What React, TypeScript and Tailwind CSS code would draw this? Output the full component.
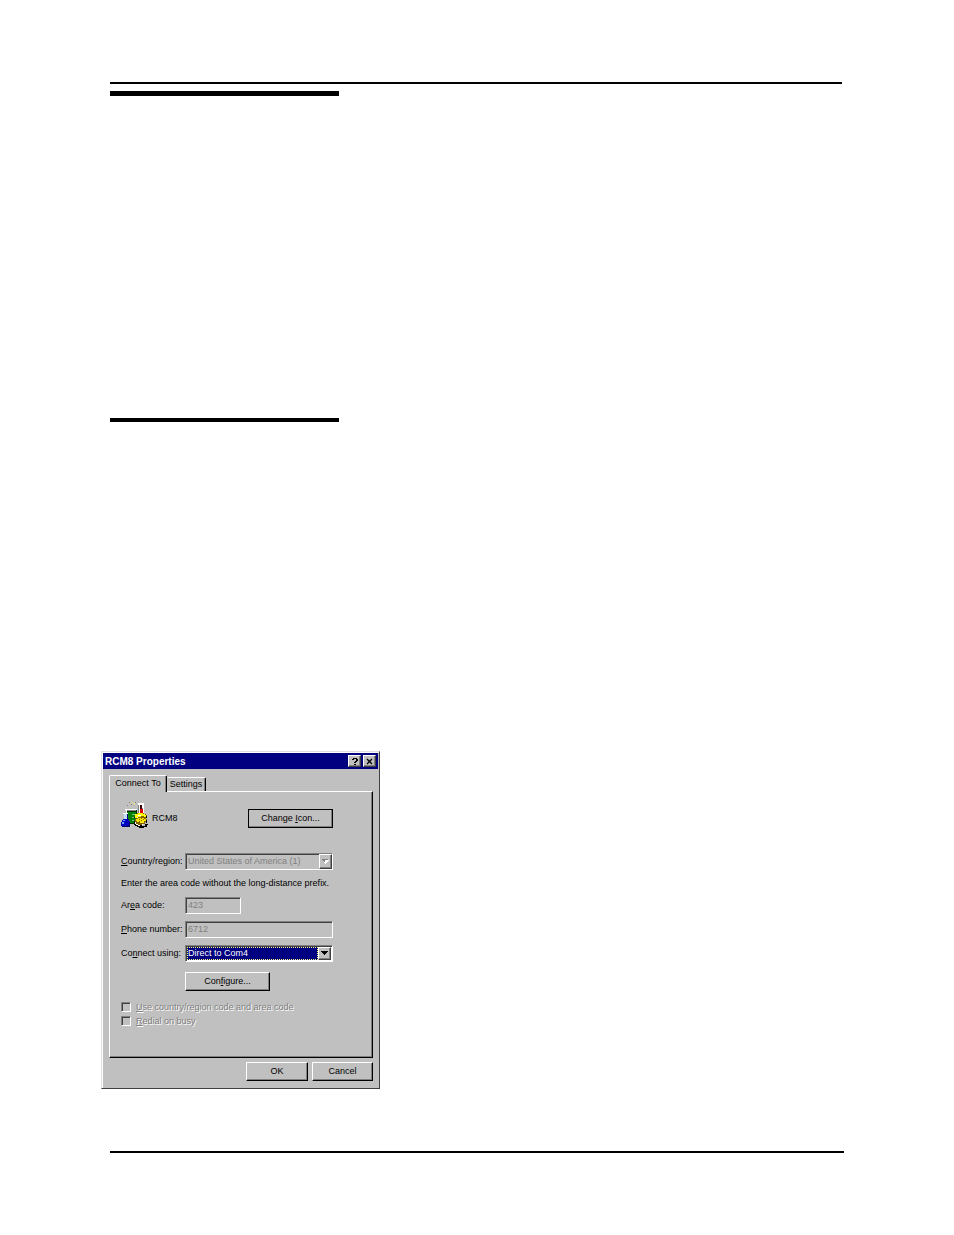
import type { ReactNode } from "react";

const raised =
  "border border-t-white border-l-white border-r-black border-b-black shadow-[inset_-1px_-1px_0_#808080]";
const raisedSoft =
  "border border-t-white border-l-white border-r-[#404040] border-b-[#404040] shadow-[inset_-1px_-1px_0_#808080]";
const sunken =
  "border border-t-[#808080] border-l-[#808080] border-r-white border-b-white shadow-[inset_1px_1px_0_#404040]";

function PushButton({ children, className = "" }: { children: ReactNode; className?: string }) {
  return (
    <button
      type="button"
      className={`flex h-[19px] items-center justify-center bg-[#c0c0c0] pb-px ${raised} ${className}`}
    >
      <span>{children}</span>
    </button>
  );
}

function Arrow({ disabled = false }: { disabled?: boolean }) {
  return (
    <span
      className={`pointer-events-none absolute top-px right-px bottom-px flex w-[13px] items-center justify-center bg-[#c0c0c0] ${raisedSoft}`}
    >
      <svg width="7" height="5" viewBox="0 0 7 5" shapeRendering="crispEdges">
        {disabled && <path d="M2 1h5v1h-1v1h-1v1h-1v1h-1v-1h-1z" fill="#fff" />}
        <path
          d={disabled ? "M0 0h6v1h-6zM1 1h2v1h-2zM2 2h1v1h-1z" : "M0 0h7v1h-7zM1 1h5v1h-5zM2 2h3v1h-3zM3 3h1v1h-1z"}
          fill={disabled ? "#808080" : "#000"}
        />
      </svg>
    </span>
  );
}

function HyperTerminalIcon() {
  return (
    <svg width="27" height="27" viewBox="0 0 27 27" shapeRendering="crispEdges" aria-hidden="true">
      {/* sparks */}
      <path d="M8 0h1v1h-1zM10 2h1v1h-1zM6 3h1v1h-1zM14 0h1v1h-1z" fill="#808080" />
      <path d="M11 0h1v1h-1zM12 1h2v1h-2zM13 2h1v1h-1zM9 1h1v1h-1z" fill="#e0e080" />
      {/* test tube */}
      <path d="M17 2h6v11h-6z" fill="#808080" />
      <path d="M17 1h6v2h-6zM18 3h1v9h-1z" fill="#fff" />
      <path d="M19 3h2v4h-2z" fill="#400000" />
      <path d="M19 7h3v6h-3z" fill="#e00000" />
      <path d="M21 3h2v3h-2zM22 6h1v6h-1z" fill="#fff" />
      {/* beaker */}
      <path d="M4 7h12v1h-12zM5 8h1v6h-1z" fill="#fff" />
      <path d="M6 8h9v1h-9z" fill="#808080" />
      <path d="M6 9h9v13h-9z" fill="#008000" />
      <path d="M6 9h9v1h-9zM15 8h1v6h-1zM7 21h9v1h-9z" fill="#003000" />
      <path d="M11 12h3v1h-3zM11 15h3v1h-3zM11 18h2v1h-2z" fill="#80c080" />
      {/* flask */}
      <path d="M3 12h3v5h-3z" fill="#c0e0ff" />
      <path d="M2 11h5v1h-5z" fill="#fff" />
      <path d="M6 12h1v5h-1zM7 17h1v1h-1z" fill="#000080" />
      <path d="M2 17h5v1h1v1h1v5h-1v1h-7v-1h-1v-4h1v-2h1z" fill="#0000c0" />
      <path d="M2 18h2v1h-2zM1 20h2v2h-2z" fill="#60a0ff" />
      <path d="M1 24h8v1h-8zM8 20h1v4h-1z" fill="#000060" />
      {/* telephone */}
      <path d="M14 21h2v1h2v1h3v1h3v-2h3v1h-1v2h-3v1h-5v-1h-2v-1h-2v-1h-2z" fill="#000" />
      <path d="M14 19h2v2h3v1h3v1h-3v1h-2v-1h-2v-1h-1z" fill="#fff" />
      <path d="M16 11h7v1h2v1h1v3h-1v1h1v3h-2v2h-3v1h-4v-1h-2v-2h-1v-3h1v-2h-1v-2h2z" fill="#806000" />
      <path d="M14 12h3v-1h5v1h2v1h1v2h-2v-1h-3v1h-3v1h-3z" fill="#ffff00" />
      <path d="M15 17h2v-1h6v1h2v2h-2v2h-4v-1h-3v-1h-1z" fill="#ffe800" />
      <path d="M17 13h3v1h-3zM16 15h1v1h-1z" fill="#fff" />
      <path d="M18 17h1v1h-1zM20 16h1v1h-1zM20 18h1v1h-1zM22 17h1v1h-1zM18 19h1v1h-1z" fill="#806000" />
      <path d="M25 14h1v2h-1zM25 18h1v3h-1zM13 15h1v1h-1zM13 19h1v2h-1z" fill="#000" />
    </svg>
  );
}

function CheckRow({ id, children }: { id: string; children: ReactNode }) {
  return (
    <div className="flex h-[14px] items-center gap-[5px]">
      <input id={id} type="checkbox" disabled className={`size-[10px] appearance-none bg-[#c0c0c0] ${sunken}`} />
      <label htmlFor={id} className="text-[#808080] [text-shadow:1px_1px_0_#fff]">
        {children}
      </label>
    </div>
  );
}

function PropertiesDialog() {
  return (
    <section
      aria-label="RCM8 Properties"
      className="w-[279px] border border-t-[#dfdfdf] border-l-[#dfdfdf] border-r-[#404040] border-b-[#404040] bg-[#c0c0c0] p-px pb-[7px] font-['Liberation_Sans',Arial,sans-serif] text-[9px] leading-[11px] text-black shadow-[inset_1px_1px_0_#fff]"
    >
      <header className="flex h-[16px] items-center gap-[2px] bg-[#000080] pr-[2px] pl-[2px]">
        <h1 className="flex-1 text-[10px] font-bold text-white">RCM8 Properties</h1>
        <button
          type="button"
          aria-label="Help"
          className={`flex h-[12px] w-[13px] items-center justify-center bg-[#c0c0c0] ${raisedSoft}`}
        >
          <svg width="6" height="7" viewBox="0 0 6 7" shapeRendering="crispEdges">
            <path d="M1 0h4v1h-4zM0 1h2v1h-2zM4 1h2v2h-2zM3 3h2v1h-2zM2 4h2v1h-2zM2 6h2v1h-2z" />
          </svg>
        </button>
        <button
          type="button"
          aria-label="Close"
          className={`flex h-[12px] w-[13px] items-center justify-center bg-[#c0c0c0] ${raisedSoft}`}
        >
          <svg width="7" height="7" viewBox="0 0 7 7">
            <path d="M1 1l5 5M6 1l-5 5" stroke="#000" strokeWidth="1.3" />
          </svg>
        </button>
      </header>

      <div className="pt-[6px] pr-[5px] pl-[6px]">
        <div role="tablist" className="flex items-end">
          <button
            type="button"
            role="tab"
            aria-selected="true"
            className="relative z-10 -mb-px h-[17px] w-[58px] rounded-t-[2px] border border-b-0 border-t-white border-l-white border-r-black bg-[#c0c0c0] pb-[2px] shadow-[inset_-1px_0_0_#808080]"
          >
            Connect To
          </button>
          <button
            type="button"
            role="tab"
            aria-selected="false"
            className="h-[14px] w-[39px] rounded-t-[2px] border border-b-0 border-l-0 border-t-white border-r-black bg-[#c0c0c0] shadow-[inset_-1px_0_0_#808080]"
          >
            Settings
          </button>
        </div>

        <form className="border border-t-white border-l-white border-r-black border-b-black px-[11px] pt-[10px] pb-[29px] shadow-[inset_-1px_-1px_0_#808080]">
          <div className="flex items-start">
            <HyperTerminalIcon />
            <span className="mt-[11px] ml-[4px] flex-1">RCM8</span>
            <PushButton className="mt-[7px] mr-[28px] w-[85px] outline outline-1 -outline-offset-1 outline-black">
              Change <u>I</u>con...
            </PushButton>
          </div>

          <div className="mt-[24px] mr-[28px] grid grid-cols-[64px_1fr] items-center">
            <label htmlFor="country" className="whitespace-nowrap">
              <u>C</u>ountry/region:
            </label>
            <div className="relative">
              <select
                id="country"
                disabled
                className={`block h-[17px] w-full appearance-none bg-[#c0c0c0] pl-[2px] text-[#808080] opacity-100 ${sunken}`}
              >
                <option>United States of America (1)</option>
              </select>
              <Arrow disabled />
            </div>

            <p className="col-span-2 my-[8px] whitespace-nowrap">
              Enter the area code without the long-distance prefix.
            </p>

            <label htmlFor="area">
              Ar<u>e</u>a code:
            </label>
            <input
              id="area"
              disabled
              defaultValue="423"
              className={`h-[17px] w-[56px] bg-[#c0c0c0] pb-px pl-[2px] text-[#808080] ${sunken}`}
            />

            <label htmlFor="phone" className="mt-[7px] whitespace-nowrap">
              <u>P</u>hone number:
            </label>
            <input
              id="phone"
              disabled
              defaultValue="6712"
              className={`mt-[7px] h-[17px] w-full bg-[#c0c0c0] pb-px pl-[2px] text-[#808080] ${sunken}`}
            />

            <label htmlFor="device" className="mt-[7px] whitespace-nowrap">
              Co<u>n</u>nect using:
            </label>
            <div className={`relative mt-[7px] bg-white p-px pr-[14px] ${sunken}`}>
              <select
                id="device"
                className="block h-[13px] w-full appearance-none border border-dotted border-[#ffff7f] bg-[#000080] leading-[11px] text-white outline-none"
              >
                <option>Direct to Com4</option>
              </select>
              <Arrow />
            </div>

            <PushButton className="col-start-2 mt-[10px] w-[85px]">
              Con<u>f</u>igure...
            </PushButton>
          </div>

          <div className="mt-[9px]">
            <CheckRow id="use-code">
              <u>U</u>se country/region code and area code
            </CheckRow>
            <CheckRow id="redial">
              <u>R</u>edial on busy
            </CheckRow>
          </div>
        </form>

        <div className="mt-[4px] flex justify-end gap-[4px]">
          <PushButton className="w-[62px]">OK</PushButton>
          <PushButton className="w-[61px]">Cancel</PushButton>
        </div>
      </div>
    </section>
  );
}

export default function App() {
  return (
    <main className="min-h-screen bg-white pt-[82px] pr-[110px] pb-[82px] pl-[101px]">
      <hr className="mr-[2px] ml-[9px] border-0 border-t-2 border-black" />
      <hr className="mt-[7px] ml-[9px] w-[229px] border-0 border-t-[5px] border-black" />
      <hr className="mt-[322px] ml-[9px] w-[229px] border-0 border-t-4 border-black" />
      <div className="mt-[329px]">
        <PropertiesDialog />
      </div>
      <hr className="mt-[62px] ml-[9px] border-0 border-t-2 border-black" />
    </main>
  );
}
